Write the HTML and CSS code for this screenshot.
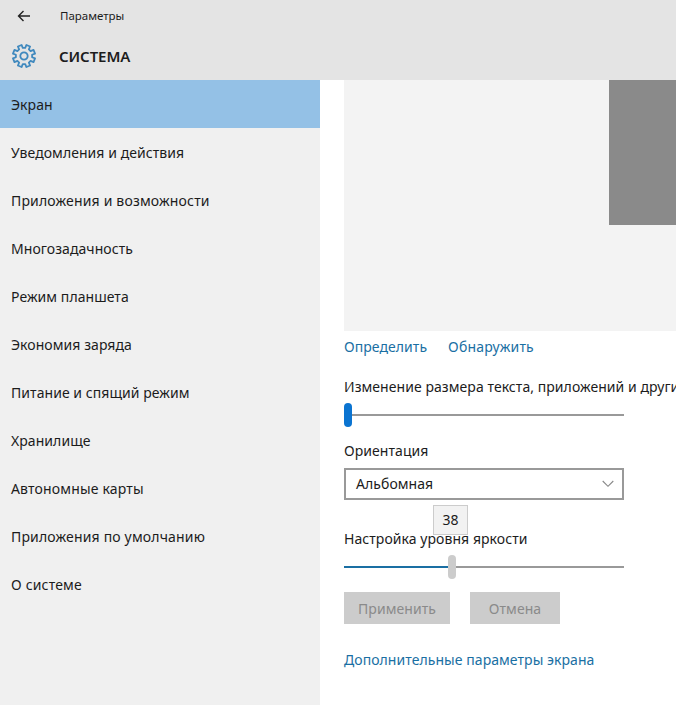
FILE: index.html
```html
<!DOCTYPE html>
<html lang="ru">
<head>
<meta charset="utf-8">
<title>Параметры</title>
<link rel="stylesheet" href="styles.css">
</head>
<body>
<header class="header">
  <div class="titlebar">
    <svg class="back" viewBox="0 0 14 12" width="14" height="12"><path d="M6.5 1 1.5 6l5 5M1.5 6H13"/></svg>
    <span class="app-name">Параметры</span>
  </div>
  <div class="heading">
    <svg class="gear" viewBox="-12 -12 24 24" width="24" height="24"><path id="gear-outline"/><circle r="3.7"/></svg>
    <h1 class="title">СИСТЕМА</h1>
  </div>
</header>
<div class="body">
  <nav class="nav">
    <a class="nav-item active"><span>Экран</span></a>
    <a class="nav-item"><span>Уведомления и действия</span></a>
    <a class="nav-item wide"><span>Приложения и возможности</span></a>
    <a class="nav-item"><span>Многозадачность</span></a>
    <a class="nav-item"><span>Режим планшета</span></a>
    <a class="nav-item"><span>Экономия заряда</span></a>
    <a class="nav-item"><span>Питание и спящий режим</span></a>
    <a class="nav-item"><span>Хранилище</span></a>
    <a class="nav-item wide"><span>Автономные карты</span></a>
    <a class="nav-item wide"><span>Приложения по умолчанию</span></a>
    <a class="nav-item wide"><span>О системе</span></a>
  </nav>
  <main class="main">
    <div class="preview"><div class="monitor"></div></div>
    <div class="links"><a class="link">Определить</a><a class="link wide">Обнаружить</a></div>
    <div class="label scale-label">Изменение размера текста, приложений и других элементов</div>
    <div class="slider scale"><div class="thumb"></div><div class="track"></div></div>
    <div class="label orient-label">Ориентация</div>
    <div class="select"><span>Альбомная</span><svg viewBox="0 0 12 8" width="12" height="8"><path d="M.7 1 6 6.3 11.3 1"/></svg></div>
    <div class="label bright-label">Настройка уровня яркости<div class="tooltip">38</div></div>
    <div class="slider bright"><div class="fill"></div><div class="thumb"></div><div class="track"></div></div>
    <div class="buttons"><div class="button apply">Применить</div><div class="button cancel">Отмена</div></div>
    <a class="link more">Дополнительные параметры экрана</a>
  </main>
</div>
<script src="script.js"></script>
</body>
</html>
```
FILE: styles.css
```css
* { box-sizing: border-box; }
body { margin: 0; width: 676px; height: 705px; overflow: hidden; background: #fff; color: #1c1c1c; font: 14px/20px "Noto Sans", "Open Sans", sans-serif; letter-spacing: .06px; }
.header { height: 80px; background: #e4e4e4; }
.titlebar { display: flex; align-items: center; height: 32px; padding-left: 17px; }
.back { fill: none; stroke: #222; stroke-width: 1.4; }
.app-name { margin-left: 29px; font-size: 11.5px; letter-spacing: 0; }
.heading { display: flex; align-items: center; height: 48px; padding-left: 12px; }
.gear { fill: none; stroke: #4089be; stroke-width: 1.8; stroke-linejoin: round; }
.title { margin: 0 0 0 23px; font-size: 15px; font-weight: 600; letter-spacing: -.1px; }
.body { display: flex; height: 625px; }
.nav { flex: none; width: 320px; background: #f0f0f0; }
.nav-item { display: flex; align-items: center; height: 48px; padding: 2px 0 0 11px; }
.wide { letter-spacing: .17px; }
.active { background: #94c1e6; }
.main { flex: 1; min-width: 0; padding-left: 24px; overflow: hidden; }
.preview { display: flex; justify-content: flex-end; height: 251px; background: #f3f3f3; }
.monitor { width: 67px; height: 145px; background: #8a8a8a; }
.links { display: flex; gap: 21px; margin-top: 6px; }
.link { color: #1a6fa3; }
.label { height: 20px; white-space: nowrap; }
.scale-label { margin-top: 20px; }
.slider { display: flex; align-items: center; width: 280px; height: 24px; }
.track { flex: 1; height: 2px; background: #999; }
.thumb { width: 8px; height: 24px; border-radius: 4px; background: #0b74d1; }
.scale { margin-top: 6px; }
.orient-label { margin-top: 14px; }
.select { display: flex; align-items: center; justify-content: space-between; width: 280px; height: 32px; margin-top: 7px; padding: 0 8px 0 10px; border: 2px solid #999; }
.select svg { fill: none; stroke: #888; stroke-width: 1.1; }
.bright-label { position: relative; margin-top: 29px; }
.tooltip { position: absolute; left: 89px; top: -24px; width: 35px; height: 30px; border: 1px solid #ccc; background: #f2f2f2; line-height: 28px; text-align: center; }
.bright { margin-top: 6px; }
.bright .thumb { background: #ccc; }
.fill { width: 104px; height: 2px; background: #1a6fa3; }
.buttons { display: flex; gap: 20px; margin-top: 13px; }
.button { height: 32px; line-height: 33px; text-align: center; background: #ccc; color: #8a8a8a; }
.apply { width: 106px; }
.cancel { width: 90px; }
.more { display: block; margin-top: 26px; }
```
FILE: script.js
```js
// Builds the eight-toothed outline of the settings gear.
const points = [];
for (let i = 0; i < 8; i++) {
  for (const [offset, r] of [[-14, 8.2], [-10, 11.3], [10, 11.3], [14, 8.2]]) {
    const a = (22.5 + i * 45 + offset) * Math.PI / 180;
    points.push((r * Math.cos(a)).toFixed(2) + " " + (r * Math.sin(a)).toFixed(2));
  }
}
document.getElementById("gear-outline").setAttribute("d", "M" + points.join("L") + "Z");
```
